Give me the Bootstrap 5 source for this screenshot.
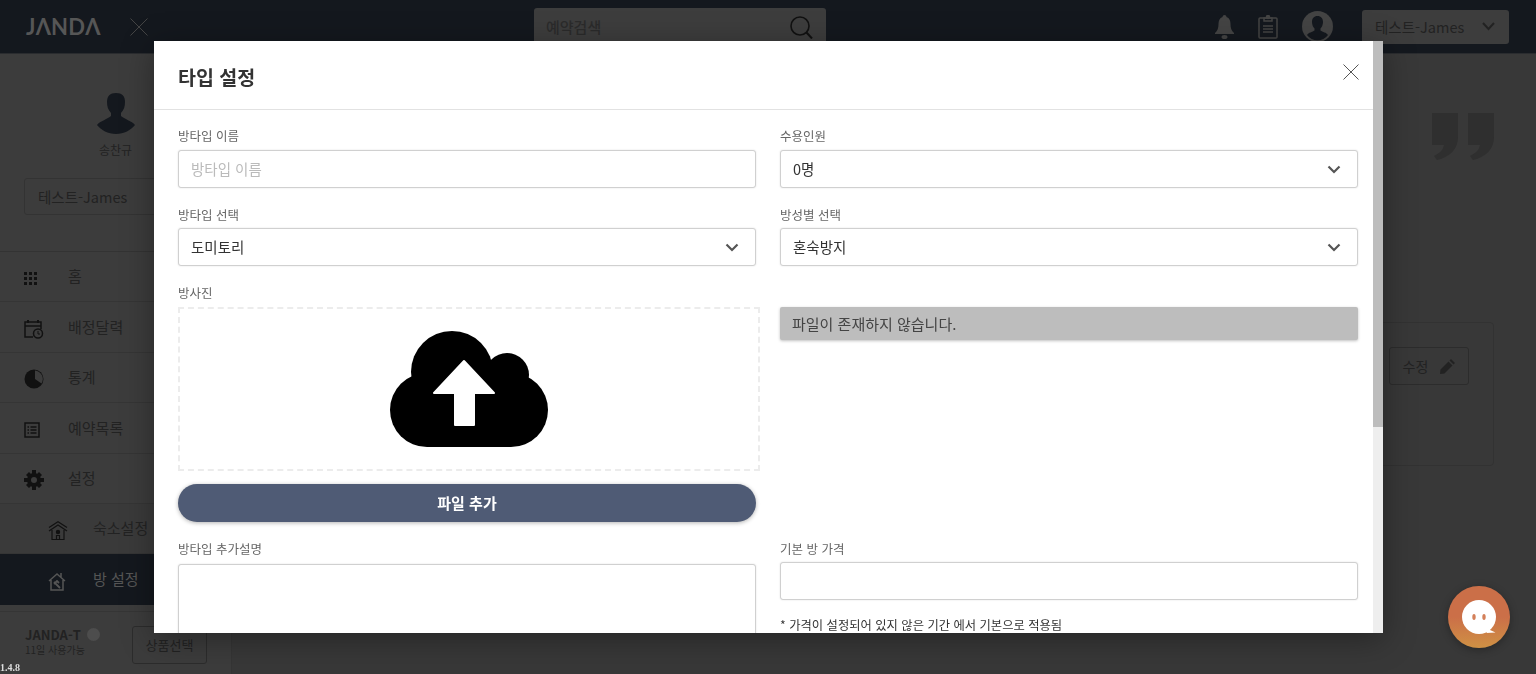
<!DOCTYPE html>
<html lang="ko">
<head>
  <meta charset="UTF-8">
  <title>타입 설정</title>
  <link rel="stylesheet" href="https://cdn.jsdelivr.net/npm/bootstrap@5.3.0/dist/css/bootstrap.min.css">
  <style>
    html, body { height: 100%; overflow: hidden; }
    body { background: #383838; font-family: "Noto Sans CJK KR", "Noto Sans", sans-serif; color: #222; }
    .top-bar { height: 54px; background: #14181e; border-bottom: 1px solid #2a2c2f; padding: 0 27px 0 26px; }
    .brand { width: 75px; font: 700 22px/1 "Lato", sans-serif; letter-spacing: .2px; color: #565656; }
    .top-x { margin: 0 1px 0 29px; }
    .top-search { width: 292px; height: 46px; margin: 8px 0 0 385px; padding: 0 13px 0 12px; background: #3d3d3d; border-radius: 3px; align-self: flex-start; font-size: 15px; font-weight: 500; color: #2b2b2b; }
    .top-icons { gap: 24px; margin-right: 29px; }
    .hotel-pick { width: 147px; height: 34px; padding: 0 14px 0 13px; background: #3d3d3d; border-radius: 3px; font-size: 14.5px; color: #222; }
    .app-body { height: 620px; }
    .side { width: 232px; background: #3c3c3c; border-right: 1px solid #353535; }
    .side-profile { height: 198px; padding-top: 39px; border-bottom: 1px solid #333; }
    .side-name { font-size: 12px; line-height: 18px; margin-top: 7px; }
    .side-pick { width: 184px; height: 37px; margin: 19px 0 0 24px; padding-left: 13px; border: 1px solid #333; border-radius: 3px; font-size: 14.5px; }
    .side-row { height: 50.4px; padding-left: 24px; border-bottom: 1px solid #353535; font-size: 15px; }
    .side-row .ico { width: 20px; margin-right: 24px; }
    .side-row.sub { padding-left: 48px; background: #3a3a3a; }
    .side-row.sub .ico { margin-right: 25px; }
    .side-row.on { background: #14181e; color: #555; border-bottom: 0; }
    .side-foot { margin-top: 6px; padding: 14px 0 0 25px; border-top: 1px solid #353535; height: 66px; }
    .plan-info { width: 107px; }
    .plan-name { font: 700 13px/17px "Noto Sans CJK KR", sans-serif; }
    .plan-days { font-size: 10px; line-height: 13px; }
    .info-dot { display: inline-block; width: 13px; height: 13px; margin-left: 6px; border-radius: 50%; background: #4d4d4d; vertical-align: -1px; }
    .plan-btn { width: 75px; height: 38px; border: 1px solid #2c2c2c; border-radius: 3px; font-size: 13px; }
    .ver-tag { position: fixed; left: 0; bottom: 0; font: 700 10px/12px "Liberation Serif", serif; color: #ddd; }
    .main-area { min-width: 0; padding: 59px 42px 0 30px; }
    .quote-mark { margin-bottom: 162px; }
    .info-panel { height: 144px; padding: 24px; border: 1px solid #323232; border-radius: 4px; }
    .edit-btn { width: 80px; height: 38px; border: 1px solid #2c2c2c; border-radius: 3px; font-size: 14px; gap: 12px; }

    .type-modal { display: block; z-index: 1055; overflow: hidden; }
    .type-modal .modal-dialog { max-width: 1229px; margin: 41px 0 0 154px; }
    .type-modal .modal-content { height: 592px; overflow: hidden; border: 0; border-radius: 0; box-shadow: 0 6px 30px rgba(0,0,0,.35); }
    .modal-pane { margin-right: 10px; }
    .pane-rail { position: absolute; top: 0; right: 0; bottom: 0; width: 10px; background: #eee; }
    .pane-thumb { height: 386px; background: #bdbdbd; }
    .type-modal .modal-header { height: 69px; padding: 4px 14px 0 24px; border-bottom: 1px solid #e2e2e2; }
    .type-modal .modal-title { font-size: 19.5px; font-weight: 700; color: #333; }
    .x-btn { margin-top: -11px; padding: 0; border: 0; background: none; line-height: 0; }
    .type-modal .modal-body { padding: 16px 15px 0 24px; }
    .f-label { display: block; margin-bottom: 3px; font-size: 12.5px; line-height: 21px; color: #666; }
    .f-label.first-row { margin-top: -1px; margin-bottom: 4px; }
    .type-modal .form-control, .type-modal .form-select { height: 38px; padding-left: 12px; border: 1px solid #d0d0d0; border-radius: 3px; font-size: 14.5px; color: #333; box-shadow: 0 0 2px rgba(0,0,0,.12); }
    .type-modal .form-control { padding-bottom: 8px; }
    .type-modal .form-select { background-position: right 15px center; background-size: 16px 16px; background-image: url("data:image/svg+xml,%3csvg xmlns='http://www.w3.org/2000/svg' viewBox='0 0 16 16'%3e%3cpath fill='none' stroke='%23555' stroke-width='2.2' d='M2.500 5.500L8 11l5.500-5.500'/%3e%3c/svg%3e"); }
    .type-modal .form-control::placeholder { color: #bbb; }
    .type-modal textarea.form-control { height: 200px; margin-top: 5px; resize: none; }
    .drop-zone { width: 582px; height: 164px; margin-top: 4px; border: 2px dashed #ececec; }
    .add-file { height: 38px; margin-top: 13px; border-radius: 19px; background: #4f5b75; color: #fff; font-size: 15px; font-weight: 700; box-shadow: 0 1px 4px rgba(0,0,0,.3); }
    .add-file:hover { background: #4f5b75; color: #fff; }
    .no-file { height: 33px; margin-top: 25px; padding-left: 12px; background: #bdbdbd; border-radius: 2px; font-size: 15px; line-height: 33px; color: #444; box-shadow: 0 1px 3px rgba(0,0,0,.25); }
    .price-note { margin-top: 19px; font-size: 12.3px; line-height: 13px; color: #333; }

    .chat-fab { position: fixed; left: 1448px; top: 586px; z-index: 1060; width: 62px; height: 62px; border-radius: 50%; background: linear-gradient(#cb6f48 50%, #cf9144); box-shadow: 0 2px 8px rgba(0,0,0,.3); }
  </style>
</head>
<body>

<header class="top-bar d-flex align-items-center">
  <div class="brand">JΛNDΛ</div>
  <svg class="top-x" width="18" height="18" viewBox="0 0 18 18" stroke="#444" fill="none"><path d="M.5.500l17 17M17.500.500l-17 17"/></svg>
  <div class="top-search d-flex align-items-start justify-content-between">
    <span class="pt-2">예약검색</span>
    <svg class="mt-2" width="23" height="23" viewBox="0 0 23 23" fill="none" stroke="#111" stroke-width="1.6"><circle cx="10" cy="10" r="9"/><path d="M16.5 16.500l5.500 6" stroke-width="2"/></svg>
  </div>
  <div class="top-icons d-flex align-items-center ms-auto">
    <svg width="19" height="24" viewBox="0 0 19 24" fill="#444"><path d="M9.500 0c1 0 2 .8 2 2 3 1 4 4 4 7 0 4 1 7 3.500 9v1H0v-1c2.500-2 3.500-5 3.500-9 0-3 1-6 4-7 0-1.200 1-2 2-2z"/><ellipse cx="9.500" cy="22" rx="3" ry="2"/></svg>
    <svg width="20" height="24" viewBox="0 0 20 24" fill="none" stroke="#444" stroke-width="1.500"><rect x="1" y="3" width="18" height="20" rx="1"/><path d="M6 3h8v3H6zM5 11h10M5 14h10M5 17h10"/><circle cx="10" cy="2" r="1.500" fill="#444"/></svg>
    <svg width="31" height="31" viewBox="0 0 31 31"><circle cx="15.500" cy="15.500" r="15.500" fill="#444"/><path d="M15.500 5c3.500 0 5.500 2.500 5.500 6 0 2.500-1 5-2.500 6.500v2c2 1.500 6 2 7.500 4.500a13 13 0 0 1-21 0c1.500-2.500 5.500-3 7.500-4.500v-2C11 16 10 13.500 10 11c0-3.500 2-6 5.500-6z" fill="#14181e"/></svg>
  </div>
  <div class="hotel-pick d-flex align-items-center justify-content-between">
    <span>테스트-James</span>
    <svg width="13" height="9" viewBox="0 0 13 9" fill="none" stroke="#222" stroke-width="2"><path d="M1 1l5.500 6L12 1"/></svg>
  </div>
</header>

<div class="app-body d-flex">
  <aside class="side flex-shrink-0">
    <div class="side-profile">
      <div class="text-center">
        <svg width="38" height="41" viewBox="0 0 38 41" fill="#14181e"><path d="M19 0c6 0 9 3 9 9 0 4-1 8-4 11v3c3 3 11 5 14 9-4 5-11 9-19 9S4 37 0 32c3-4 11-6 14-9v-3c-3-3-4-7-4-11 0-6 3-9 9-9z"/></svg>
        <div class="side-name">송찬규</div>
      </div>
      <div class="side-pick d-flex align-items-center">테스트-James</div>
    </div>
    <div class="side-row d-flex align-items-center">
      <span class="ico"><svg width="14" height="13" viewBox="0 0 14 13" fill="#111"><path d="M0 0h3v3H0zM5 0h3v3H5zM10 0h3v3h-3zM0 5h3v3H0zM5 5h3v3H5zM10 5h3v3h-3zM0 10h3v3H0zM5 10h3v3H5zM10 10h3v3h-3z"/></svg></span>홈
    </div>
    <div class="side-row d-flex align-items-center">
      <span class="ico"><svg width="20" height="20" viewBox="0 0 20 20" fill="none" stroke="#111" stroke-width="1.500"><path d="M9 18H1V3h16v7M1 7h16" /><path d="M4 1v3M14 1v3" stroke-width="2"/><circle cx="14" cy="14.500" r="4.500"/><path d="M14 12v3h2" stroke-width="1"/></svg></span>배정달력
    </div>
    <div class="side-row d-flex align-items-center">
      <span class="ico"><svg width="20" height="20" viewBox="0 0 20 20"><circle cx="10" cy="10" r="9.500" fill="#111"/><path d="M11 1.500a8.500 8.500 0 0 1 6.500 13L11 10z" fill="#3c3c3c"/></svg></span>통계
    </div>
    <div class="side-row d-flex align-items-center">
      <span class="ico"><svg width="16" height="16" viewBox="0 0 16 16" fill="none" stroke="#111" stroke-width="1.500"><rect x="1" y="1" width="14" height="14"/><path d="M3.500 5h1.500M6.500 5h6M3.500 8h1.500M6.500 8h6M3.500 11h1.500M6.500 11h6"/></svg></span>예약목록
    </div>
    <div class="side-row d-flex align-items-center">
      <span class="ico"><svg width="20" height="20" viewBox="0 0 20 20"><circle cx="10" cy="10" r="5" fill="none" stroke="#111" stroke-width="4"/><path d="M8 0h4v4H8zM8 16h4v4H8zM0 8h4v4H0zM16 8h4v4h-4z" fill="#111"/><path d="M2 5l3-3 3 3-3 3zM12 5l3-3 3 3-3 3zM2 15l3-3 3 3-3 3zM12 15l3-3 3 3-3 3z" fill="#111"/></svg></span>설정
    </div>
    <div class="side-row sub d-flex align-items-center">
      <span class="ico"><svg width="20" height="19" viewBox="0 0 20 19" fill="none" stroke="#111" stroke-width="1.200"><path d="M1 10l9-6 9 6M1 6.500L10 .8l9 5.700M4 9v9.500h12V9"/><circle cx="10" cy="11" r="1.600" fill="#111"/><path d="M8.500 18.500v-4h3v4"/></svg></span>숙소설정
    </div>
    <div class="side-row sub on d-flex align-items-center">
      <span class="ico"><svg width="18" height="19" viewBox="0 0 18 19" fill="none" stroke="#555" stroke-width="1.500"><path d="M1 9l8-7 8 7M3 8v10h12V8M13 1v4"/><path d="M6 10l6 6M6 12l3-3 2 2" stroke-width="1.800"/></svg></span>방 설정
    </div>
    <div class="side-foot d-flex">
      <div class="plan-info">
        <div class="plan-name">JANDA-T<span class="info-dot"></span></div>
        <div class="plan-days">11일 사용가능</div>
      </div>
      <div class="plan-btn d-flex align-items-center justify-content-center">상품선택</div>
    </div>
  </aside>

  <main class="main-area flex-grow-1">
    <div class="quote-mark d-flex justify-content-end">
      <svg width="62" height="47" viewBox="0 0 62 47" fill="#2f2f2f"><path d="M0 0h26v24c0 12-8 20-21 23l-3-4c6-3 9-6 10-11H0zM36 0h26v24c0 12-8 20-21 23l-3-4c6-3 9-6 10-11H36z"/></svg>
    </div>
    <div class="info-panel d-flex justify-content-end">
      <div class="edit-btn d-flex align-items-center justify-content-center">
        수정
        <svg width="15" height="15" viewBox="0 0 15 15" fill="#222"><path d="M11 0l4 4-1.500 1.500-4-4zM8.500 2.500l4 4L4.500 14.500 0 15l.5-4.500z"/></svg>
      </div>
    </div>
  </main>
</div>

<div class="ver-tag">1.4.8</div>

<div class="modal type-modal" tabindex="-1">
  <div class="modal-dialog">
    <div class="modal-content">
      <div class="modal-pane">
        <div class="modal-header">
          <h5 class="modal-title">타입 설정</h5>
          <button type="button" class="x-btn ms-auto" aria-label="Close">
            <svg width="16" height="16" viewBox="0 0 16 16" fill="none" stroke="#555"><path d="M.5.500l15 15M15.500.500l-15 15"/></svg>
          </button>
        </div>
        <div class="modal-body">
          <div class="row gx-4">
            <div class="col-6 mb-3">
              <label class="f-label first-row">방타입 이름</label>
              <input type="text" class="form-control" placeholder="방타입 이름">
            </div>
            <div class="col-6 mb-3">
              <label class="f-label first-row">수용인원</label>
              <select class="form-select"><option>0명</option></select>
            </div>
            <div class="col-6 mb-3">
              <label class="f-label">방타입 선택</label>
              <select class="form-select"><option>도미토리</option></select>
            </div>
            <div class="col-6 mb-3">
              <label class="f-label">방성별 선택</label>
              <select class="form-select"><option>혼숙방지</option></select>
            </div>
            <div class="col-6">
              <label class="f-label mb-0">방사진</label>
              <div class="drop-zone d-flex align-items-center justify-content-center">
                <svg width="158" height="116" viewBox="390 331 158 116">
                  <circle cx="452" cy="372" r="41"/>
                  <circle cx="507" cy="375" r="22"/>
                  <circle cx="427" cy="410" r="37"/>
                  <circle cx="511" cy="410" r="37"/>
                  <rect x="427" y="385" width="84" height="62"/>
                  <path d="M464 361l30 32h-20v32h-19v-32h-21z" fill="#fff" stroke="#fff" stroke-width="2" stroke-linejoin="round"/>
                </svg>
              </div>
              <button type="button" class="btn add-file w-100 d-flex align-items-center justify-content-center">파일 추가</button>
            </div>
            <div class="col-6">
              <div class="no-file">파일이 존재하지 않습니다.</div>
            </div>
            <div class="col-6 pt-3">
              <label class="f-label mb-0">방타입 추가설명</label>
              <textarea class="form-control"></textarea>
            </div>
            <div class="col-6 pt-3">
              <label class="f-label">기본 방 가격</label>
              <input type="text" class="form-control">
              <div class="price-note">* 가격이 설정되어 있지 않은 기간 에서 기본으로 적용됨</div>
            </div>
          </div>
        </div>
      </div>
      <div class="pane-rail"><div class="pane-thumb"></div></div>
    </div>
  </div>
</div>

<div class="chat-fab d-flex align-items-center justify-content-center">
  <svg width="34" height="34" viewBox="0 0 34 34"><circle cx="17" cy="17" r="17" fill="#fff"/><path d="M26 24l2 6 5.500 2.500-9 .5z" fill="#fff"/><ellipse cx="12" cy="17" rx="1.700" ry="3" fill="#d4805a"/><ellipse cx="22" cy="17" rx="1.700" ry="3" fill="#d4805a"/></svg>
</div>

<script src="https://cdn.jsdelivr.net/npm/bootstrap@5.3.0/dist/js/bootstrap.bundle.min.js"></script>
</body>
</html>
